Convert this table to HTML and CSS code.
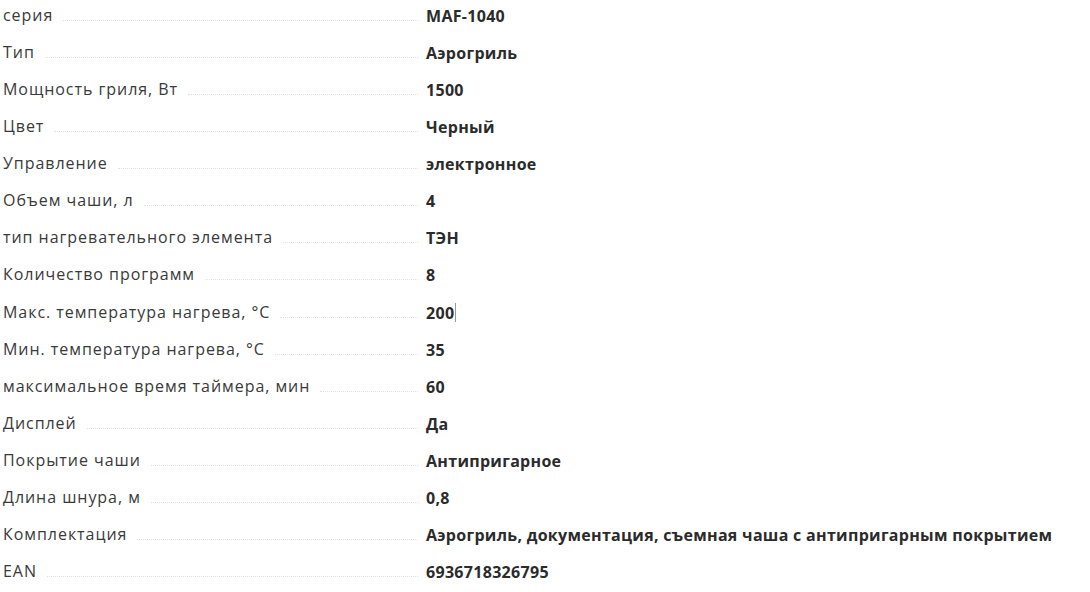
FILE: index.html
```html
<!DOCTYPE html>
<html lang="ru">
<head>
<meta charset="utf-8">
<link rel="stylesheet" href="styles.css">
</head>
<body>
<div class="specs">
  <div class="row"><div class="name"><span>серия</span><i class="dots"></i></div><div class="val">MAF-1040</div></div>
  <div class="row"><div class="name"><span>Тип</span><i class="dots"></i></div><div class="val">Аэрогриль</div></div>
  <div class="row"><div class="name"><span>Мощность гриля, Вт</span><i class="dots"></i></div><div class="val">1500</div></div>
  <div class="row"><div class="name"><span>Цвет</span><i class="dots"></i></div><div class="val">Черный</div></div>
  <div class="row"><div class="name"><span>Управление</span><i class="dots"></i></div><div class="val">электронное</div></div>
  <div class="row"><div class="name"><span>Объем чаши, л</span><i class="dots"></i></div><div class="val">4</div></div>
  <div class="row"><div class="name"><span>тип нагревательного элемента</span><i class="dots"></i></div><div class="val">ТЭН</div></div>
  <div class="row"><div class="name"><span>Количество программ</span><i class="dots"></i></div><div class="val">8</div></div>
  <div class="row"><div class="name"><span>Макс. температура нагрева, °С</span><i class="dots"></i></div><div class="val">200<span class="caret"></span></div></div>
  <div class="row"><div class="name"><span>Мин. температура нагрева, °С</span><i class="dots"></i></div><div class="val">35</div></div>
  <div class="row"><div class="name"><span>максимальное время таймера, мин</span><i class="dots"></i></div><div class="val">60</div></div>
  <div class="row"><div class="name"><span>Дисплей</span><i class="dots"></i></div><div class="val">Да</div></div>
  <div class="row"><div class="name"><span>Покрытие чаши</span><i class="dots"></i></div><div class="val">Антипригарное</div></div>
  <div class="row"><div class="name"><span>Длина шнура, м</span><i class="dots"></i></div><div class="val">0,8</div></div>
  <div class="row"><div class="name"><span>Комплектация</span><i class="dots"></i></div><div class="val">Аэрогриль, документация, съемная чаша с антипригарным покрытием</div></div>
  <div class="row"><div class="name"><span>EAN</span><i class="dots"></i></div><div class="val">6936718326795</div></div>
</div>
</body>
</html>
```
FILE: styles.css
```css
html, body {
  margin: 0;
  padding: 0;
  background: #fff;
}
body {
  font-family: "Open Sans", "Liberation Sans", sans-serif;
  font-size: 16px;
  color: #333;
}
.specs {
  padding: 3px 0 0 3px;
  display: flex;
  flex-direction: column;
}
.row {
  display: flex;
  align-items: baseline;
  height: 37.07px;
  padding-top: 1px;
  box-sizing: border-box;
}
.name {
  width: 415px;
  flex: none;
  display: flex;
  align-items: baseline;
  letter-spacing: 0.95px;
  color: #3a3a3a;
}
.name span {
  white-space: nowrap;
}
.dots {
  flex: 1;
  margin-left: 10px;
  border-bottom: 1px dotted #e2e2e2;
}
.val {
  margin-left: 8px;
  font-weight: 700;
  color: #2b2b2b;
  letter-spacing: 0.3px;
  white-space: nowrap;
  display: flex;
  align-items: center;
  position: relative;
  top: 1px;
}
.caret {
  display: inline-block;
  width: 1px;
  height: 19px;
  background: #999;
  margin-left: 1px;
}
```
